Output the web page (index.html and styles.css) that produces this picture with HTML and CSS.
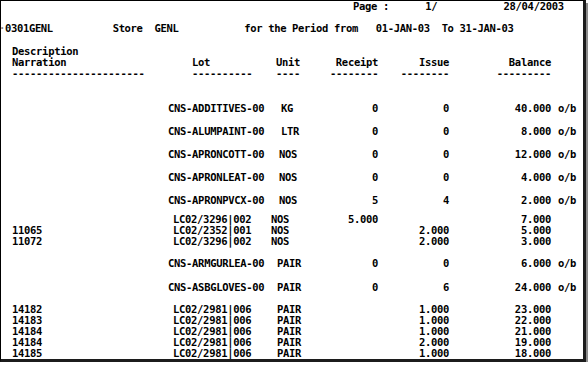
FILE: index.html
```html
<!DOCTYPE html>
<html>
<head>
<meta charset="utf-8">
<link rel="stylesheet" href="styles.css">
</head>
<body>
<div class="frame">
  <div class="line page">Page :      1/           28/04/2003</div>
  <div class="line title"><span class="cut">·</span>0301GENL          Store  GENL           for the Period from   01-JAN-03  To 31-JAN-03</div>
  <div class="line desc">Description</div>
  <div class="row head">
    <span>Narration</span><span class="lot-h">Lot</span><span class="unit-h">Unit</span><span class="num">Receipt</span><span class="num">Issue</span><span class="num">Balance</span><span></span>
  </div>
  <div class="row head">
    <span>----------------------</span><span class="lot-h">----------</span><span class="unit-h">----</span><span class="num">--------</span><span class="num">--------</span><span class="num">---------</span><span></span>
  </div>

  <div class="row item">
    <span></span><span>CNS-ADDITIVES-00</span><span class="u-a">KG</span><span class="num">0</span><span class="num">0</span><span class="num">40.000</span><span class="ob">o/b</span>
  </div>
  <div class="row item">
    <span></span><span>CNS-ALUMPAINT-00</span><span class="u-a">LTR</span><span class="num">0</span><span class="num">0</span><span class="num">8.000</span><span class="ob">o/b</span>
  </div>
  <div class="row item">
    <span></span><span>CNS-APRONCOTT-00</span><span class="u-b">NOS</span><span class="num">0</span><span class="num">0</span><span class="num">12.000</span><span class="ob">o/b</span>
  </div>
  <div class="row item">
    <span></span><span>CNS-APRONLEAT-00</span><span class="u-b">NOS</span><span class="num">0</span><span class="num">0</span><span class="num">4.000</span><span class="ob">o/b</span>
  </div>
  <div class="row item">
    <span></span><span>CNS-APRONPVCX-00</span><span class="u-b">NOS</span><span class="num">5</span><span class="num">4</span><span class="num">2.000</span><span class="ob">o/b</span>
  </div>

  <div class="row lots">
    <span></span><span class="lc">LC02/3296|002</span><span class="u-l">NOS</span><span class="num">5.000</span><span class="num"></span><span class="num">7.000</span><span></span>
  </div>
  <div class="row">
    <span>11065</span><span class="lc">LC02/2352|001</span><span class="u-l">NOS</span><span class="num"></span><span class="num">2.000</span><span class="num">5.000</span><span></span>
  </div>
  <div class="row">
    <span>11072</span><span class="lc">LC02/3296|002</span><span class="u-l">NOS</span><span class="num"></span><span class="num">2.000</span><span class="num">3.000</span><span></span>
  </div>

  <div class="row item2">
    <span></span><span>CNS-ARMGURLEA-00</span><span class="u-p">PAIR</span><span class="num">0</span><span class="num">0</span><span class="num">6.000</span><span class="ob">o/b</span>
  </div>
  <div class="row item3">
    <span></span><span>CNS-ASBGLOVES-00</span><span class="u-p">PAIR</span><span class="num">0</span><span class="num">6</span><span class="num">24.000</span><span class="ob">o/b</span>
  </div>

  <div class="row item2">
    <span>14182</span><span class="lc">LC02/2981|006</span><span class="u-p">PAIR</span><span class="num"></span><span class="num">1.000</span><span class="num">23.000</span><span></span>
  </div>
  <div class="row">
    <span>14183</span><span class="lc">LC02/2981|006</span><span class="u-p">PAIR</span><span class="num"></span><span class="num">1.000</span><span class="num">22.000</span><span></span>
  </div>
  <div class="row">
    <span>14184</span><span class="lc">LC02/2981|006</span><span class="u-p">PAIR</span><span class="num"></span><span class="num">1.000</span><span class="num">21.000</span><span></span>
  </div>
  <div class="row">
    <span>14184</span><span class="lc">LC02/2981|006</span><span class="u-p">PAIR</span><span class="num"></span><span class="num">2.000</span><span class="num">19.000</span><span></span>
  </div>
  <div class="row">
    <span>14185</span><span class="lc">LC02/2981|006</span><span class="u-p">PAIR</span><span class="num"></span><span class="num">1.000</span><span class="num">18.000</span><span></span>
  </div>
</div>
</body>
</html>
```

FILE: styles.css
```css
html, body {
  margin: 0;
  padding: 0;
  background: #ffffff;
}

.frame {
  box-sizing: border-box;
  width: 586px;
  height: 362px;
  background: #ffffff;
  border-top: 1px solid #000;
  border-left: 1px solid #000;
  border-right: 3px solid #1c1c1c;
  border-bottom: 3px solid #1c1c1c;
  box-shadow: 3px 3px 0 #8c8c8c;
  overflow: hidden;
  font-family: "DejaVu Sans Mono", "Liberation Mono", monospace;
  font-weight: bold;
  font-size: 10.5px;
  letter-spacing: -0.3px;
  line-height: 11px;
  color: #000;
  display: flex;
  flex-direction: column;
}

.line {
  height: 11px;
  white-space: pre;
}

.page {
  padding-left: 352px;
}

.title {
  margin-top: 11px;
  margin-left: -2px;
  letter-spacing: -0.34px;
}

.cut {
  color: #888;
}

.desc {
  margin-top: 12px;
  padding-left: 11px;
}

.row {
  height: 11px;
  display: grid;
  grid-template-columns: 156px 102px 60px 48px 71px 102px 37px;
  padding-left: 11px;
  white-space: pre;
}

.num {
  text-align: right;
}

.lot-h {
  padding-left: 24px;
}

.unit-h {
  padding-left: 6px;
}

.lc {
  padding-left: 5px;
}

.u-a {
  padding-left: 11px;
}

.u-b {
  padding-left: 9px;
}

.u-l {
  padding-left: 1px;
}

.u-p {
  padding-left: 7px;
}

.ob {
  padding-left: 7px;
}

.item {
  margin-top: 12px;
}

.head + .item {
  margin-top: 24px;
}

.lots {
  margin-top: 8px;
}

.item2 {
  margin-top: 11px;
}

.item3 {
  margin-top: 13px;
}
```
